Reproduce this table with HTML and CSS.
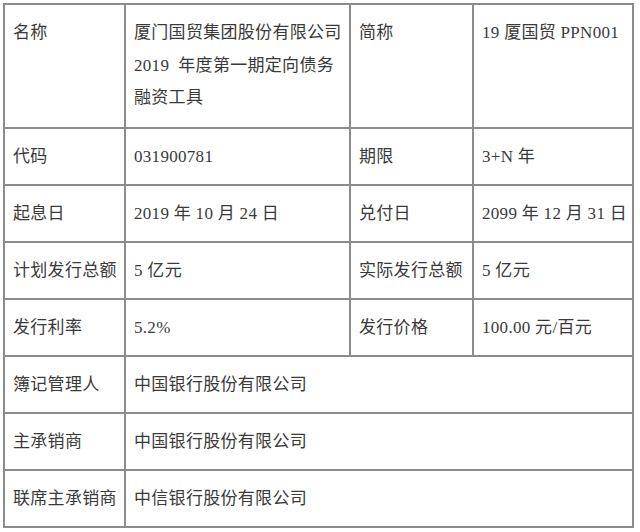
FILE: index.html
```html
<!DOCTYPE html>
<html lang="zh-CN">
<head>
<meta charset="utf-8">
<title>债务融资工具</title>
<link rel="stylesheet" href="styles.css">
</head>
<body>
<div class="sheet">
  <div class="cell">名称</div>
  <div class="cell">厦门国贸集团股份有限公司<br>2019&nbsp; 年度第一期定向债务<br>融资工具</div>
  <div class="cell">简称</div>
  <div class="cell">19 厦国贸 PPN001</div>

  <div class="cell">代码</div>
  <div class="cell">031900781</div>
  <div class="cell">期限</div>
  <div class="cell">3+N 年</div>

  <div class="cell">起息日</div>
  <div class="cell">2019 年 10 月 24 日</div>
  <div class="cell">兑付日</div>
  <div class="cell">2099 年 12 月 31 日</div>

  <div class="cell">计划发行总额</div>
  <div class="cell">5 亿元</div>
  <div class="cell">实际发行总额</div>
  <div class="cell">5 亿元</div>

  <div class="cell">发行利率</div>
  <div class="cell">5.2%</div>
  <div class="cell">发行价格</div>
  <div class="cell">100.00 元/百元</div>

  <div class="cell">簿记管理人</div>
  <div class="cell wide">中国银行股份有限公司</div>

  <div class="cell">主承销商</div>
  <div class="cell wide">中国银行股份有限公司</div>

  <div class="cell">联席主承销商</div>
  <div class="cell wide">中信银行股份有限公司</div>
</div>
</body>
</html>
```

FILE: styles.css
```css
html, body {
  margin: 0;
  padding: 0;
  background: #ffffff;
}

body {
  padding: 3px 0 0 3px;
  font-family: "Liberation Serif", "Noto Sans CJK SC", serif;
  font-size: 17px;
  color: #3a3a3a;
}

.sheet {
  display: grid;
  grid-template-columns: 119px 223px 121px 158px;
  grid-template-rows: 122px repeat(7, 55px);
  gap: 2px;
  padding: 2px;
  width: max-content;
  background: #8c8c8c;
}

.cell {
  background: #ffffff;
  padding: 12px 0 0 8px;
  line-height: 32.5px;
  letter-spacing: 0.3px;
  white-space: nowrap;
  overflow: hidden;
}

.wide {
  grid-column: span 3;
}
```
